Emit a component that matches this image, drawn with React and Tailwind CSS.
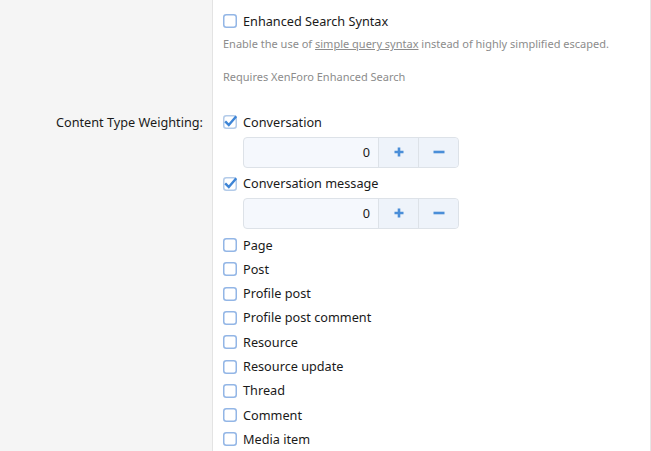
import React from "react";

function Box({ checked }) {
  return (
    <svg width="14" height="14" viewBox="0 0 14 14" className="shrink-0">
      <rect x="0.75" y="0.75" width="12.5" height="12.5" rx="2.5" fill="#fff" stroke={checked ? "#b3cbe9" : "#93b6e6"} strokeWidth="1.5" />
      {checked && (
        <path d="M3 7.2 L5.8 10 L12.5 2.2" fill="none" stroke="#3e85d6" strokeWidth="2.4" strokeLinecap="square" />
      )}
    </svg>
  );
}

function Check({ label, checked }) {
  return (
    <div className="flex items-center gap-[6px] h-[24.3px]">
      <Box checked={checked} />
      <span className="text-[12.7px] text-[#1a1a1a]">{label}</span>
    </div>
  );
}

function Spinner() {
  return (
    <div className="ml-[20px] mt-[2px] mb-[4px] flex h-[31px] w-[216px] rounded-[4px] border border-[#dde2e8] bg-[#f5f8fd]">
      <div className="flex-1 flex items-center justify-end pr-[8px] text-[12.7px] text-[#1a1a1a]">0</div>
      <div className="w-[40px] flex items-center justify-center border-l border-[#dde2e8] bg-[#eef3fa]">
        <svg width="12" height="12" viewBox="0 0 12 12">
          <path d="M6 1.5v9M1.5 6h9" stroke="#4a8ed8" strokeWidth="2.6" />
        </svg>
      </div>
      <div className="w-[40px] flex items-center justify-center border-l border-[#dde2e8] bg-[#eef3fa] rounded-r-[4px]">
        <svg width="12" height="12" viewBox="0 0 12 12">
          <path d="M0.5 6h11" stroke="#4a8ed8" strokeWidth="2.6" />
        </svg>
      </div>
    </div>
  );
}

export default function App() {
  const items = ["Page", "Post", "Profile post", "Profile post comment", "Resource", "Resource update", "Thread", "Comment", "Media item"];
  return (
    <div className="h-[451px] w-[651px] overflow-hidden bg-white" style={{ fontFamily: '"Noto Sans", sans-serif' }}>
      <div className="flex h-full">
        <div className="w-[213px] shrink-0 bg-[#f5f5f5] border-r border-[#e3e3e3] pt-[110px] pr-[9px] text-right">
          <div className="h-[24px] leading-[24px] text-[12.7px] text-[#1a1a1a]">Content Type Weighting:</div>
        </div>
        <div className="flex-1 border-r border-[#e6e6e6] pl-[10px] pt-[9px]">
          <Check label="Enhanced Search Syntax" />
          <div className="mt-[2px] text-[11px] leading-[18px] text-[#8c8c8c]">
            Enable the use of <span className="underline">simple query syntax</span> instead of highly simplified escaped.
          </div>
          <div className="mt-[15px] text-[11px] leading-[18px] text-[#8c8c8c]">Requires XenForo Enhanced Search</div>
          <div className="mt-[24px]">
            <Check label="Conversation" checked />
            <Spinner />
            <Check label="Conversation message" checked />
            <Spinner />
            {items.map((t) => (
              <Check key={t} label={t} />
            ))}
          </div>
        </div>
      </div>
    </div>
  );
}
